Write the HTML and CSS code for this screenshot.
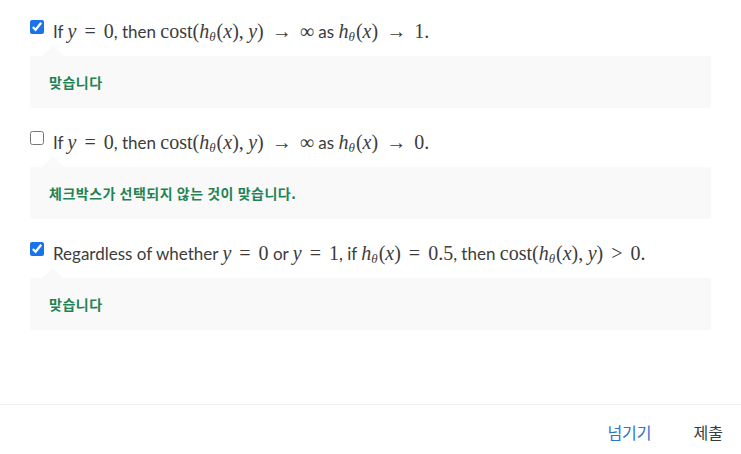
FILE: index.html
```html
<!DOCTYPE html>
<html>
<head>
<meta charset="UTF-8">
<title>퀴즈</title>
<link rel="stylesheet" href="styles.css">
</head>
<body>
<section class="quiz">
	<div class="option">
		<label class="question">
			<input type="checkbox" checked>
			<span class="text">If <i class="m">y</i><span class="mo">=</span><span class="mn">0</span>, then <span class="mn">cost(</span><i class="m">h</i><sub class="m">θ</sub><span class="mn">(</span><i class="m">x</i><span class="mn">),</span> <i class="m">y</i><span class="mn">)</span><span class="mo">→</span><span class="mn">∞</span> as <i class="m">h</i><sub class="m">θ</sub><span class="mn">(</span><i class="m">x</i><span class="mn">)</span><span class="mo">→</span><span class="mn">1.</span></span>
		</label>
		<div class="feedback">맞습니다</div>
	</div>

	<div class="option">
		<label class="question">
			<input type="checkbox">
			<span class="text">If <i class="m">y</i><span class="mo">=</span><span class="mn">0</span>, then <span class="mn">cost(</span><i class="m">h</i><sub class="m">θ</sub><span class="mn">(</span><i class="m">x</i><span class="mn">),</span> <i class="m">y</i><span class="mn">)</span><span class="mo">→</span><span class="mn">∞</span> as <i class="m">h</i><sub class="m">θ</sub><span class="mn">(</span><i class="m">x</i><span class="mn">)</span><span class="mo">→</span><span class="mn">0.</span></span>
		</label>
		<div class="feedback">체크박스가 선택되지 않는 것이 맞습니다.</div>
	</div>

	<div class="option">
		<label class="question">
			<input type="checkbox" checked>
			<span class="text">Regardless of whether <i class="m">y</i><span class="mo">=</span><span class="mn">0</span> or <i class="m">y</i><span class="mo">=</span><span class="mn">1</span>, if <i class="m">h</i><sub class="m">θ</sub><span class="mn">(</span><i class="m">x</i><span class="mn">)</span><span class="mo">=</span><span class="mn">0.5</span>, then <span class="mn">cost(</span><i class="m">h</i><sub class="m">θ</sub><span class="mn">(</span><i class="m">x</i><span class="mn">),</span> <i class="m">y</i><span class="mn">)</span><span class="mo">&gt;</span><span class="mn">0.</span></span>
		</label>
		<div class="feedback">맞습니다</div>
	</div>
</section>

<footer class="actions">
	<button type="button" class="skip">넘기기</button>
	<button type="button" class="submit">제출</button>
</footer>
</body>
</html>
```

FILE: styles.css
```css
* {
	margin: 0px;
	padding: 0px;
	box-sizing: border-box;
}

html, body {
	height: 100%;
}

body {
	display: flex;
	flex-direction: column;
	background: #ffffff;
	color: #3c3c3c;
	font-family: 'Open Sans', 'Noto Sans CJK KR', sans-serif;
}

.quiz {
	flex: 1;
	padding: 20px 30px 0 30px;
}

.option {
	margin-bottom: 23px;
}

.question {
	display: flex;
	align-items: center;
	height: 24px;
	margin-bottom: 12px;
	font-family: 'Lato', sans-serif;
	font-size: 17px;
	cursor: pointer;
}

.question input {
	align-self: flex-start;
	width: 14px;
	height: 14px;
	margin: 0 9px 0 0;
	accent-color: #1a73e8;
}

.text {
	white-space: nowrap;
}

.m, .mn, .mo {
	font-family: 'Liberation Serif', serif;
	font-size: 20px;
}

.m {
	font-style: italic;
}

sub.m {
	font-size: 13px;
	vertical-align: -3px;
	margin-right: 1px;
}

.mo {
	padding: 0 8px;
}

.feedback {
	position: relative;
	height: 52px;
	padding: 16px 19px;
	background: #f9f9f9;
	color: #1f8354;
	font-family: 'Noto Sans CJK KR', sans-serif;
	font-size: 14px;
	font-weight: bold;
	line-height: 20px;
	letter-spacing: 0.5px;
}

/* 말풍선 꼬리 */
.feedback:before {
	content: '';
	position: absolute;
	top: -10px;
	left: 12px;
	border-left: 11px solid transparent;
	border-right: 11px solid transparent;
	border-bottom: 10px solid #f9f9f9;
}

.actions {
	display: flex;
	justify-content: flex-end;
	align-items: center;
	height: 50px;
	padding: 5px 18px 0 0;
	gap: 42px;
	border-top: 1px solid #efefef;
}

.actions button {
	border: none;
	background: none;
	font-family: 'Noto Sans CJK KR', sans-serif;
	font-size: 16px;
	cursor: pointer;
}

.skip {
	color: #2a73cc;
}

.submit {
	color: #373a3c;
}
```
